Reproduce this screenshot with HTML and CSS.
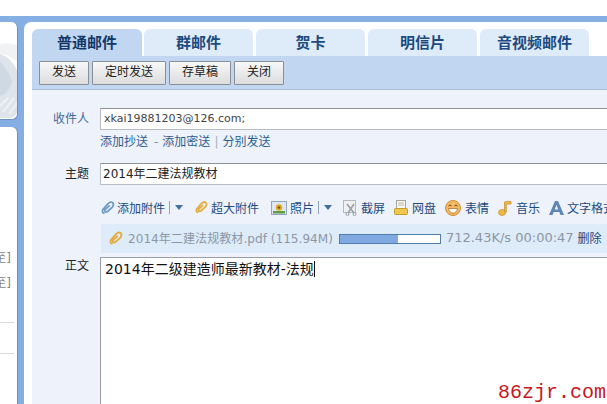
FILE: index.html
```html
<!DOCTYPE html>
<html lang="en">
  <head>
    <meta charset="UTF-8" />
    <title>写信</title>
    <link rel="stylesheet" href="styles.css">
  </head>
  <body>
    <div class="top-gap"></div>
    <div class="frame">
      <aside class="sidebar">
        <div class="side-top">
          <svg class="swoosh" width="18" height="97" viewBox="0 0 18 97">
            <path d="M0 22 Q10 20 18 24 V40 Q8 32 0 32Z" fill="#f0f2f4" />
            <path d="M0 32 Q10 34 18 50 V88 Q16 95 10 96 H0Z" fill="#dde4ec" />
            <path d="M0 40 Q8 46 12 60 Q8 72 0 74Z" fill="#cfd9e3" />
            <path d="M0 84 L8 76 M3 90 L14 76 M9 92 L18 80" stroke="#eef2f6" stroke-width="2" />
          </svg>
        </div>
        <div class="side-list">
          <div class="side-tag">至]</div>
          <div class="side-tag">至]</div>
          <div class="side-line first-line"></div>
          <div class="side-line"></div>
        </div>
      </aside>

      <main class="compose">
        <nav class="tabs">
          <a class="tab active">普通邮件</a>
          <a class="tab">群邮件</a>
          <a class="tab">贺卡</a>
          <a class="tab">明信片</a>
          <a class="tab">音视频邮件</a>
        </nav>

        <div class="actions">
          <button class="btn btn-send">发送</button>
          <button class="btn btn-timer">定时发送</button>
          <button class="btn btn-draft">存草稿</button>
          <button class="btn btn-close">关闭</button>
        </div>

        <form class="form">
          <div class="row row-to">
            <label class="label">收件人</label>
            <div class="input">xkai19881203@126.com;</div>
          </div>
          <div class="cc-links">
            <a>添加抄送</a><span class="dash">-</span><a>添加密送</a><span class="bar">|</span><a>分别发送</a>
          </div>
          <div class="row row-subject">
            <label class="label dark">主题</label>
            <div class="input subject">2014年二建法规教材</div>
          </div>

          <div class="tools">
            <a class="tool t-attach">
              <svg width="14" height="16" viewBox="0 0 16 16"><path d="M4 14 Q1 14 2 10 L8 3 Q11 0 13.500 2 Q15 4 13 7 L7.500 12 Q5.500 13.500 4.500 12 Q4 11 5 9.500 L10 5" fill="none" stroke="#6d9bc9" stroke-width="2" /></svg>
              添加附件
            </a>
            <span class="split"></span>
            <svg class="caret" width="8" height="5" viewBox="0 0 10 6"><path d="M0 0H10L5 6Z" fill="#3f6ea3" /></svg>
            <a class="tool t-big">
              <svg width="13" height="15" viewBox="0 0 16 16"><path d="M4 14 Q1 14 2 10 L8 3 Q11 0 13.500 2 Q15 4 13 7 L7.500 12 Q5.500 13.500 4.500 12 Q4 11 5 9.500 L10 5" fill="none" stroke="#e5ad3f" stroke-width="2.200" /></svg>
              超大附件
            </a>
            <a class="tool t-photo">
              <svg width="16" height="14" viewBox="0 0 16 14"><rect x="0.500" y="0.500" width="15" height="13" fill="#dfe8f2" stroke="#8fa6bd" /><circle cx="8" cy="6.500" r="3.200" fill="#e0ac22" /><circle cx="8" cy="6.500" r="1.300" fill="#7a5a12" /><rect x="2" y="10" width="12" height="2.500" fill="#5f9a45" /></svg>
              照片
            </a>
            <span class="split"></span>
            <svg class="caret" width="8" height="5" viewBox="0 0 10 6"><path d="M0 0H10L5 6Z" fill="#3f6ea3" /></svg>
            <a class="tool t-shot">
              <svg width="15" height="16" viewBox="0 0 15 16"><rect x="0.500" y="0.500" width="12" height="12" fill="#eef0f2" stroke="#b4bac1" /><path d="M4 4 L11 13 M11 4 L5 13" stroke="#9aa1a8" stroke-width="1.600" /><circle cx="4.500" cy="14" r="1.500" fill="none" stroke="#9aa1a8" /><circle cx="11.500" cy="14" r="1.500" fill="none" stroke="#9aa1a8" /></svg>
              截屏
            </a>
            <a class="tool t-disk">
              <svg width="14" height="15" viewBox="0 0 14 15"><rect x="2.500" y="0.500" width="9" height="8" fill="#f7f7f4" stroke="#a5a59a" /><path d="M4 3H10M4 5H10" stroke="#b9b9ae" /><rect x="0.500" y="8.500" width="13" height="6" rx="1" fill="#f1c84f" stroke="#c49a2c" /></svg>
              网盘
            </a>
            <a class="tool t-smile">
              <svg width="16" height="16" viewBox="0 0 16 16"><circle cx="8" cy="8" r="7.500" fill="#f3b964" stroke="#d28c2e" /><path d="M3.500 6 Q5 4 6.500 6M9.500 6 Q11 4 12.500 6" fill="none" stroke="#6b3d0c" /><path d="M3.500 8.500 H12.500 Q11.500 13 8 13 Q4.500 13 3.500 8.500Z" fill="#fff" stroke="#a8641a" stroke-width="0.700" /></svg>
              表情
            </a>
            <a class="tool t-music">
              <svg width="14" height="16" viewBox="0 0 14 16"><ellipse cx="4" cy="12.500" rx="3.500" ry="3" fill="#efb64c" stroke="#c98c25" stroke-width="0.700" /><path d="M6.500 12 V2 Q9.500 0.800 13 1.500 V4 Q10 3.600 8.300 4.600 V12Z" fill="#efb64c" stroke="#c98c25" stroke-width="0.700" /></svg>
              音乐
            </a>
            <a class="tool t-font">
              <svg width="15" height="14" viewBox="0 0 15 14"><path d="M0 14 L6 0 H9 L15 14 H11.500 L10.300 11 H4.700 L3.500 14Z M5.700 8.500 H9.300 L7.500 4Z" fill="#5c86b3" fill-rule="evenodd" /></svg>
              文字格式
            </a>
          </div>

          <div class="upload">
            <svg class="clip" width="14" height="15" viewBox="0 0 16 16"><path d="M4 14 Q1 14 2 10 L8 3 Q11 0 13.500 2 Q15 4 13 7 L7.500 12 Q5.500 13.500 4.500 12 Q4 11 5 9.500 L10 5" fill="none" stroke="#e5ad3f" stroke-width="2.200" /></svg>
            <span class="file">2014年二建法规教材.pdf (115.94M)</span>
            <div class="progress"><div class="progress-fill" style="width: 58%"></div></div>
            <span class="speed">712.43K/s 00:00:47</span>
            <a class="remove">删除</a>
          </div>

          <div class="row row-body">
            <label class="label dark">正文</label>
            <div class="editor"><span class="editor-text">2014年二级建造师最新教材-法规</span></div>
          </div>
        </form>
      </main>
    </div>
    <div class="watermark">86zjr.com</div>
  </body>
</html>
```

FILE: styles.css
```css
html,
body {
  margin: 0;
  height: 100%;
  overflow: hidden;
  background: #fff;
}

body {
  font-family: "DejaVu Sans", "Noto Sans CJK SC", sans-serif;
  font-size: 12px;
  display: flex;
  flex-direction: column;
}

.top-gap {
  height: 16px;
  flex: none;
}

/* Blue frame */
.frame {
  flex: 1;
  min-height: 0;
  display: flex;
  gap: 6px;
  padding-top: 6px;
  background: #85aee3;
}

/* Left column, cut off by the window */
.sidebar {
  width: 18px;
  flex: none;
  display: flex;
  flex-direction: column;
  gap: 7px;
}

.side-top {
  height: 98px;
  background: #fff;
  border-radius: 0 6px 6px 0;
  border-right: 1px solid #6f90bc;
  border-bottom: 1px solid #6f90bc;
  box-sizing: border-box;
  overflow: hidden;
}

.swoosh {
  display: block;
}

.side-list {
  flex: 1;
  background: #fff;
  border-radius: 0 6px 0 0;
  border-right: 1px solid #6f90bc;
  overflow: hidden;
  padding-top: 123px;
}

.side-tag {
  width: 11px;
  height: 25px;
  line-height: 16px;
  color: #888;
  display: flex;
  justify-content: flex-end;
  white-space: nowrap;
}

.side-line {
  height: 1px;
  width: 14px;
  background: #d8d8d8;
  margin-top: 30px;
}

.first-line {
  margin-top: 22px;
}

/* Compose panel */
.compose {
  flex: 1;
  min-width: 0;
  background: #fff;
  border-radius: 7px 0 0 0;
  padding: 7px 0 0 8px;
  display: flex;
  flex-direction: column;
}

.tabs {
  display: flex;
  gap: 2px;
  height: 27px;
  flex: none;
}

.tab {
  width: 109px;
  line-height: 29px;
  text-align: center;
  font-size: 15px;
  font-weight: bold;
  color: #1d4a80;
  background: #deebf9;
  border-radius: 6px 6px 0 0;
}

.tab:nth-child(n+3) {
  margin-left: 1px;
}

.tab.active {
  width: 110px;
  background: #c1d6f0;
  color: #12386b;
}

.actions {
  height: 34px;
  flex: none;
  box-sizing: border-box;
  background: #c1d6f0;
  border-bottom: 1px solid #a9bccf;
  padding: 5px 0 0 7px;
  display: flex;
  gap: 3px;
  align-items: flex-start;
}

.btn {
  height: 24px;
  padding: 0 0 6px;
  font: inherit;
  color: #222;
  background: linear-gradient(#f8f8f8, #dcdcdc);
  border: 1px solid #8a8f96;
  border-radius: 1px;
}

.btn-send,
.btn-close {
  width: 50px;
}

.btn-timer {
  width: 74px;
}

.btn-draft {
  width: 62px;
}

/* Form */
.form {
  flex: 1;
  min-height: 0;
  background: #eef3fb;
  padding-top: 18px;
  display: flex;
  flex-direction: column;
}

.row {
  display: flex;
}

.label {
  width: 57px;
  flex: none;
  text-align: right;
  line-height: 23px;
  margin-right: 11px;
  color: #3d6a9c;
}

.label.dark {
  color: #222;
}

.input {
  flex: 1;
  height: 22px;
  box-sizing: border-box;
  margin-right: -4px;
  padding-left: 3px;
  font-size: 11px;
  line-height: 19px;
  background: #fff;
  border: 1px solid #b8bdc4;
  border-top: 1px solid #8d9297;
  color: #444;
}

.input.subject {
  font-size: 12px;
  color: #222;
  padding-left: 2px;
  line-height: 20px;
}

.cc-links {
  margin: 3px 0 0 68px;
  height: 17px;
  line-height: 16px;
  color: #2a5d94;
}

.dash {
  margin: 0 4px 0 6px;
  color: #7d8fa3;
}

.bar {
  margin: 0 4px;
  color: #a5b2c0;
}

.row-subject {
  margin-top: 12px;
}

.tools {
  margin: 12px 0 0 69px;
  height: 24px;
  flex: none;
  box-sizing: border-box;
  padding-bottom: 5px;
  display: flex;
  align-items: center;
  white-space: nowrap;
  color: #1d4a80;
}

.tool {
  display: flex;
  align-items: center;
  gap: 3px;
  flex: none;
}

.tool svg,
.caret,
.clip {
  flex: none;
}

.t-attach {
  gap: 2px;
}

.split {
  width: 1px;
  height: 13px;
  margin: 0 5px 0 4px;
  flex: none;
  background: #8ba4bf;
}

.t-big,
.t-photo {
  margin-left: 12px;
}

.t-shot {
  margin-left: 11px;
}

.t-disk,
.t-smile,
.t-music,
.t-font {
  margin-left: 9px;
}

.t-disk,
.t-smile,
.t-music {
  gap: 4px;
}

/* Upload in progress */
.upload {
  margin: 2px 0 0 69px;
  height: 29px;
  flex: none;
  box-sizing: border-box;
  padding-left: 8px;
  display: flex;
  align-items: center;
  background: #deebf9;
  color: #8c97a5;
  font-size: 13px;
  white-space: nowrap;
}

.file {
  margin-left: 5px;
  padding-bottom: 2px;
  font-size: 12.1px;
}

.progress {
  width: 100px;
  height: 8px;
  margin: 0 5px 0 6px;
  background: #fff;
  border: 1px solid #4f7eaf;
  flex: none;
}

.progress-fill {
  height: 100%;
  background: #7fa9e0;
}

.speed {
  padding-bottom: 2px;
}

.remove {
  margin-left: 4px;
  padding-bottom: 2px;
  font-size: 12px;
  color: #1d4a80;
}

.row-body {
  flex: 1;
  min-height: 0;
  margin-top: 4px;
}

.row-body .label {
  line-height: 18px;
}

.editor {
  flex: 1;
  box-sizing: border-box;
  margin-right: -4px;
  padding: 1px 4px;
  background: #fff;
  border-top: 1px solid #9a9fa5;
  border-left: 1px solid #9a9fa5;
  font-size: 14px;
  line-height: 20px;
  color: #111;
}

.editor-text {
  border-right: 1px solid #111;
}

.watermark {
  position: absolute;
  right: 1px;
  bottom: 0;
  font-family: "Liberation Mono", monospace;
  font-size: 20px;
  line-height: 22px;
  color: #c8161d;
}
```
